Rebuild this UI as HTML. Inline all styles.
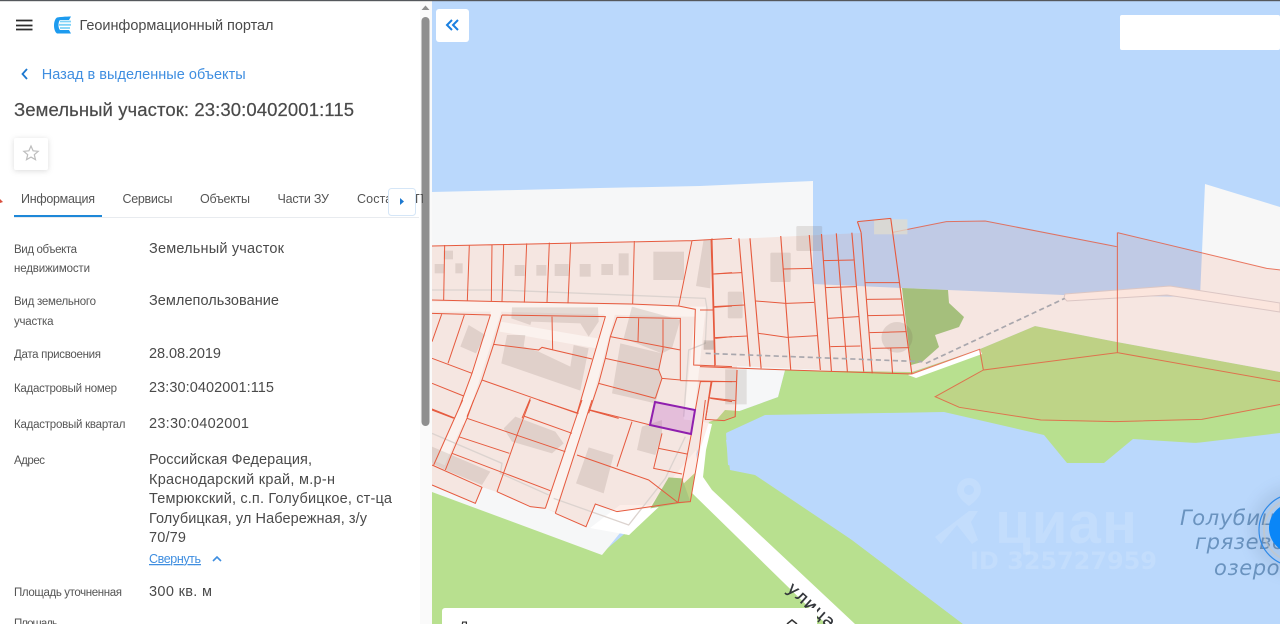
<!DOCTYPE html>
<html lang="ru"><head><meta charset="utf-8"><title>Геоинформационный портал</title>
<style>
html,body{margin:0;padding:0;width:1280px;height:624px;overflow:hidden;background:#fff}
svg{position:absolute;left:0;top:0;display:block}
text{font-family:"Liberation Sans","Noto Sans CJK SC",sans-serif}
.l{font-size:11.5px;fill:#555}
.v{font-size:14.5px;fill:#4a4a4a}
.t{font-size:12.5px;fill:#555}
.p{fill:rgba(241,108,67,.12)}
.ln{fill:none;stroke:#e65a3e}
.b{fill:rgba(110,85,75,.15);stroke:none}
</style></head><body>
<svg width="1280" height="624" viewBox="0 0 1280 624" xmlns="http://www.w3.org/2000/svg">
<!-- MAP -->
<g style="filter:blur(.2px)">
<rect x="432" y="0" width="848" height="624" fill="#bad8fc"/>
<!-- green -->
<polygon fill="#b8e08f" points="432,488 602,553 629,530 695,465 709,422 778,397 785,370 912,372 980,349 1035,326 1117,342 1280,372 1280,440 1133,445 1100,470 1060,470 1040,440 760,420 726,440 730,470 755,475 852,540 963,624 432,624"/>
<!-- land -->
<polygon fill="#f6f7f8" points="432,192 600,188 700,186 813,181 813,284 948,290 948,300 960,320 940,350 912,372 785,370 778,397 709,422 690,470 629,535 620,533 602,555 432,492"/>
<polygon fill="#f7f7f7" points="948,290 1063,295 1200,297 1205,184 1280,207 1280,372 1117,342 1035,326 980,349 912,372"/>
<!-- dark green -->
<polygon fill="#9bcb84" points="902,288 948,290 949,303 964,317 959,327 935,335 939,347 922,362 911,365"/>
<!-- lake mask -->
<polygon fill="#bad8fc" points="726,433 765,415 944,412 1044,435 1067,463 1104,463 1133,439 1196,443 1280,433 1280,624 963,624 852,540 752,470 728,465"/>
<polygon fill="#b8e08f" points="725,436 730,425 765,413 725,410 712,425 706,470 715,482"/>
<!-- road -->
<polygon fill="#fff" points="703,422 712,424 706,450 703,477 712,490 855,624 826,624 692,493 695,470"/>
<polygon fill="#fff" points="908,375 980,349 982,354 916,378"/>
<!-- south land white strip -->
<polygon fill="#fff" points="629,535 590,528 620,505 650,505 696,450 698,470"/>
<!-- pier -->
<polygon fill="#fdf6f3" stroke="#d9d3d6" stroke-width="1" points="1065,294 1170,286 1280,303 1280,312 1167,295 1067,301 1064,298"/>
<!-- large sea parcel -->
<g transform="translate(700,170) scale(.37037,.33333)">
<polygon class="p" points="520,187 665,155 770,153 1125,230 1127,188 1530,295 1568,300 1568,635 1127,548 765,600 755,538 572,612"/>
<polygon fill="rgba(241,108,67,.1)" points="765,600 1127,548 1568,635 1568,703 1355,748 1120,755 920,750 700,712 635,680"/>
<g class="ln" stroke-width="3" stroke-opacity=".8">
<path d="M520,187 665,155 770,153 1125,230M1127,188V548M1127,188 1530,295 1568,300M572,612 755,538 765,600 1127,548 1568,635M765,600 635,680 700,712 920,750 1120,755 1355,748 1568,703"/>
</g>
</g>
<!-- village -->
<polygon fill="rgba(241,108,67,.12)" points="432,246 692,241 861,233 857,222 891,218 912,374 737,366 737,370 735,417 724,421 709,422 699,453 690,502 650,508 617,512 595,504 586,527 545,508 530,507 497,492 482,487 475,503 432,485"/>
<!-- streets & buildings: zoom 3 coords -->
<g transform="translate(432,210) scale(.33333)">
<g fill="none" stroke="#fbf2ee" stroke-width="30">
<path d="M0,290 205,290 760,305 805,305 770,630"/>
<path d="M197,290 85,640"/>
<path d="M537,300 452,620"/>
<path d="M205,350 495,400"/>
</g>
<g fill="none" stroke="#dcd3cf" stroke-width="4">
<path d="M0,240 200,240 820,265 825,295 820,400 770,420 755,620"/>
</g>
<rect class="b" x="35" y="122" width="28" height="26"/><rect class="b" x="8" y="162" width="28" height="28"/><rect class="b" x="70" y="160" width="22" height="30"/><rect class="b" x="248" y="165" width="30" height="33"/><rect class="b" x="313" y="165" width="30" height="32"/><rect class="b" x="368" y="162" width="42" height="36"/><rect class="b" x="443" y="162" width="33" height="38"/><rect class="b" x="508" y="162" width="35" height="33"/><rect class="b" x="560" y="130" width="30" height="66"/><rect class="b" x="664" y="125" width="92" height="85"/>
<polygon class="b" points="815,88 838,88 835,235 792,228"/>
<polygon class="b" points="240,292 498,292 500,335 470,380 445,340 298,335 295,345 238,325"/>
<polygon class="b" points="225,375 280,375 275,410 320,425 415,470 425,405 470,415 445,542 208,460"/>
<polygon class="b" points="600,290 745,330 720,415 690,430 575,385"/>
<polygon class="b" points="565,400 690,430 680,480 690,505 670,580 540,550"/>
<polygon class="b" points="110,345 160,375 132,430 85,410"/>
<polygon class="b" points="815,395 848,392 845,418 815,418"/>
<g class="ln" stroke-width="3">
<path d="M0,108 780,92 900,85M38,105 35,270M112,105 106,272M180,103 178,275M215,102 210,275M284,100 277,278M352,98 345,278M416,97 408,280M607,93 602,282M780,92 740,288"/>
<path d="M0,270 205,275 600,282 740,288 790,298 785,465 900,470"/>
<path d="M210,315 520,320 435,610M555,322 745,325 745,510 690,505M360,320 362,420M185,403 320,420 330,412 480,447M210,315 185,403 150,510 105,620M150,510 435,610M555,322 535,380 520,445 500,520 470,610M535,380 745,420M620,325 618,395M693,328 693,418 680,480 690,505 670,565M520,445 680,480M500,520 670,565M470,600 560,625M295,565 270,625"/>
<path d="M0,310 175,315 120,490 70,625M30,310 0,395M97,315 48,460M0,445 120,490M0,520 95,558M0,597 70,625"/>
<path d="M840,85 850,465M845,192 900,188M845,292 900,288M850,385 900,380M745,512 900,515M805,515 790,600M840,515 820,630M835,565 900,575"/>
</g>
</g>
<!-- zoom 4 coords -->
<g transform="translate(432,400) scale(.33333)">
<g fill="none" stroke="#fbf2ee" stroke-width="28">
<path d="M108,0 25,190"/><path d="M465,0 355,330"/>
</g>
<polygon fill="#a9c77f" points="710,232 750,235 775,305 655,325"/>
<polygon class="b" points="215,85 250,50 370,95 395,130 360,160 240,125"/>
<polygon class="b" points="470,142 545,165 515,280 432,250"/>
<polygon class="b" points="630,80 690,60 690,100 670,165 615,150"/>
<polygon class="b" points="0,140 175,215 150,255 40,210 0,190"/>
<g fill="none" stroke="#dcd3cf" stroke-width="4">
<path d="M0,100 210,190 205,220 350,285M365,295 590,375 700,235 760,110"/>
</g>
<g class="ln" stroke-width="3">
<path d="M0,30 65,55M92,0 5,195M125,0 105,55 60,160 40,210M295,0 255,105 195,275M105,55 400,155M80,110 232,160M275,48 420,100M320,0 440,40M450,0 340,325M480,0 370,340"/>
<path d="M0,195 150,262 130,310 0,255M60,160 355,272M195,275 295,320 340,325M370,340 462,380 490,312 555,335 738,308M435,165 650,240 738,308M475,30 655,75M600,65 555,200M680,145 765,162M690,100 665,205 750,222M778,102 738,308M820,0 800,160 775,305 738,308"/>
</g>
</g>
<!-- zoom 5 coords -->
<g transform="translate(700,170) scale(.37037,.33333)">
<rect class="b" x="260" y="168" width="70" height="75" rx="4"/><rect class="b" x="190" y="248" width="55" height="88" rx="4"/><rect class="b" x="75" y="365" width="40" height="80" rx="4"/><rect class="b" x="68" y="598" width="58" height="105"/><rect class="b" x="10" y="510" width="30" height="30"/>
<rect fill="rgba(225,220,205,.75)" x="470" y="148" width="90" height="45"/>
<ellipse class="b" cx="532" cy="502" rx="42" ry="46"/>
<g class="ln" stroke-width="3">
<path d="M30,208 40,590M105,205 135,590M135,205 165,595M218,198 245,600M295,195 325,600M328,192 355,605M368,190 398,605M410,188 442,605M435,188 465,610M515,145 572,612M425,155 515,145M425,155 435,188"/>
<path d="M35,312 112,308M35,410 120,405M40,503 128,498M150,393 232,400 308,397M158,490 235,502 318,497M225,297 303,295M332,272 415,270M338,353 422,350M345,445 428,440M352,530 433,528M447,338 538,338M450,388 545,387M453,437 550,435M458,488 558,485M463,535 565,533M515,535 520,612"/>
<path d="M0,590 240,600 572,612M0,635H100M100,600 95,740 65,752 15,748 30,635M22,683 95,692M0,420H35"/>
</g>
<g fill="none" stroke="#a9a7ad" stroke-width="5" stroke-dasharray="14 9">
<path d="M15,550 600,575"/><path d="M610,580 985,385"/>
</g>
</g>
<!-- selected parcel -->
<polygon points="655,402 695,410 691,434 650,425" fill="rgba(180,70,200,.25)" stroke="#8f1fae" stroke-width="2"/>
<!-- labels -->
<text transform="translate(786,590) rotate(42)" font-size="17" fill="#33363b" stroke="#33363b" stroke-width=".3" style="font-family:'DejaVu Sans',sans-serif" textLength="58">улица</text>
<text x="1180" y="525" font-size="21" fill="#6a93bf" font-style="italic" style="font-family:'DejaVu Sans',sans-serif" letter-spacing=".6">Голубицкое</text>
<text x="1195" y="549" font-size="21" fill="#6a93bf" font-style="italic" style="font-family:'DejaVu Sans',sans-serif" letter-spacing=".6">грязевое</text>
<text x="1214" y="575" font-size="21" fill="#6a93bf" font-style="italic" style="font-family:'DejaVu Sans',sans-serif" letter-spacing=".6">озеро</text>
<!-- watermark -->
<g fill="#fff" fill-opacity=".13">
<path fill-rule="evenodd" d="M969,478a12,12 0 0 1 12,12c0,8-12,16-12,16s-12-8-12-16a12,12 0 0 1 12-12zm0,7a5,5 0 1 0 0,10a5,5 0 0 0 0-10z"/>
<path d="M969,511 978,511 971,522 978,540 972,544 957,525 941,544 935,537z"/>
<text x="995" y="543" font-size="58" font-weight="bold" textLength="142">циан</text>
<text x="970" y="569" font-size="24" font-weight="bold" style="font-family:'DejaVu Sans',sans-serif" textLength="187">ID 325727959</text>
</g>
<!-- blue point -->
<circle cx="1295" cy="530" r="46" fill="rgba(60,80,110,.1)" style="filter:blur(6px)"/>
<circle cx="1295" cy="530" r="36" fill="none" stroke="#2f8ae8" stroke-width="1.200"/>
<circle cx="1295" cy="530" r="31" fill="none" stroke="#c9c7c0" stroke-width="2" stroke-opacity=".6"/>
<circle cx="1294.500" cy="528" r="25.500" fill="#0a86f7"/>
</g>
<!-- Map controls -->
<rect x="1120" y="15" width="160" height="35" rx="2" fill="#fff"/>
<rect x="436" y="9" width="33" height="33" rx="3" fill="#fff"/>
<path d="M452,20 447,25 452,30M458,20 453,25 458,30" fill="none" stroke="#1a7fe0" stroke-width="2"/>
<rect x="442" y="608" width="375" height="30" rx="3" fill="#fff"/>
<text x="459" y="631" font-size="14" fill="#333">Д</text>
<path d="M787,624 792,620 797,624" fill="none" stroke="#333" stroke-width="1.500"/>

<!-- PANEL -->
<rect x="0" y="0" width="432" height="624" fill="#fff"/>
<rect x="420" y="0" width="12" height="624" fill="#fafafa"/>
<rect x="421.500" y="17" width="8" height="409" rx="4" fill="#8f8f8f"/>
<path d="M421.500,10 425.500,5.500 429.500,10z" fill="#8f8f8f"/>
<rect x="0" y="0" width="1280" height="1.200" fill="#55585c"/>
<!-- header -->
<path d="M16,20.500H32.500M16,25.500H32.500M16,29.500H32.500" stroke="#2b2b2b" stroke-width="1.800"/>
<path d="M57,17.500C59,17 66,16.500 71,16.500L69,20H60C58,22 58,28 60,30H69L71,33.500H57C53,31 53,20 57,17.500Z" fill="#1d9bef"/>
<path d="M60,21.500H71M59,24.800H71M60,28H70" stroke="#7fd2f7" stroke-width="1.800"/>
<text x="79.500" y="30" font-size="14.500" fill="#4a4a4a" textLength="194">Геоинформационный портал</text>
<path d="M27,69 22.500,74 27,79" fill="none" stroke="#1c78d0" stroke-width="1.800"/>
<text x="41.700" y="79" font-size="14.500" fill="#3f8ee0" textLength="204">Назад в выделенные объекты</text>
<text x="14" y="116" font-size="18.500" fill="#4a4a4a" stroke="#4a4a4a" stroke-width=".2" textLength="340">Земельный участок: 23:30:0402001:115</text>
<rect x="14" y="138" width="34" height="32" rx="2" fill="#fff" style="filter:drop-shadow(0 1px 3px rgba(0,0,0,.14))"/>
<path d="M31,146 33.100,150.800 38.200,151.300 34.300,154.700 35.500,159.700 31,157.100 26.500,159.700 27.700,154.700 23.800,151.300 28.900,150.800z" fill="none" stroke="#bdbdbd" stroke-width="1.200"/>
<!-- tabs -->
<path d="M0,199 3,202 0,203z" fill="#d9503f"/>
<text class="t" x="21" y="203" fill="#444" textLength="74">Информация</text>
<text class="t" x="122.500" y="203" textLength="50">Сервисы</text>
<text class="t" x="200" y="203" textLength="50">Объекты</text>
<text class="t" x="277.500" y="203" textLength="51.500">Части ЗУ</text>
<text class="t" x="357" y="203" textLength="42">Состав</text>
<text class="t" x="415" y="203">П</text>
<rect x="419.500" y="190" width="1" height="20" fill="#fff"/>
<rect x="14" y="217" width="405" height="1" fill="#e8ebef"/>
<rect x="14" y="215" width="88" height="2" fill="#1e88d8"/>
<rect x="388.500" y="188.500" width="27" height="27" rx="3" fill="#fff" stroke="#d5e6f7"/>
<path d="M400,198 404,201.500 400,205z" fill="#1c78d0"/>
<!-- rows -->
<text class="l" x="14" y="253" textLength="63">Вид объекта</text>
<text class="l" x="14" y="272" textLength="76">недвижимости</text>
<text class="l" x="14" y="305" textLength="82">Вид земельного</text>
<text class="l" x="14" y="325" textLength="39.500">участка</text>
<text class="l" x="14" y="358" textLength="87">Дата присвоения</text>
<text class="l" x="14" y="392" textLength="103">Кадастровый номер</text>
<text class="l" x="14" y="428" textLength="111.500">Кадастровый квартал</text>
<text class="l" x="14" y="464" textLength="31">Адрес</text>
<text class="l" x="14" y="596" textLength="108">Площадь уточненная</text>
<text class="l" x="14" y="627" textLength="44">Площадь</text>
<text class="v" x="149" y="253" textLength="135">Земельный участок</text>
<text class="v" x="149" y="305" textLength="130">Землепользование</text>
<text class="v" x="149" y="358" textLength="72">28.08.2019</text>
<text class="v" x="149" y="392" textLength="125">23:30:0402001:115</text>
<text class="v" x="149" y="428" textLength="100">23:30:0402001</text>
<text class="v" x="149" y="464" textLength="163">Российская Федерация,</text>
<text class="v" x="149" y="484" textLength="186">Краснодарский край, м.р-н</text>
<text class="v" x="149" y="503" textLength="243">Темрюкский, с.п. Голубицкое, ст-ца</text>
<text class="v" x="149" y="523" textLength="218">Голубицкая, ул Набережная, з/у</text>
<text class="v" x="149" y="542" textLength="37">70/79</text>
<text x="149" y="563" font-size="12.500" fill="#3f8ee0" text-decoration="underline" textLength="52">Свернуть</text>
<path d="M213,561 217,557 221,561" fill="none" stroke="#3f8ee0" stroke-width="1.600"/>
<text class="v" x="149" y="596" textLength="63">300 кв. м</text>
</svg>
</body></html>
